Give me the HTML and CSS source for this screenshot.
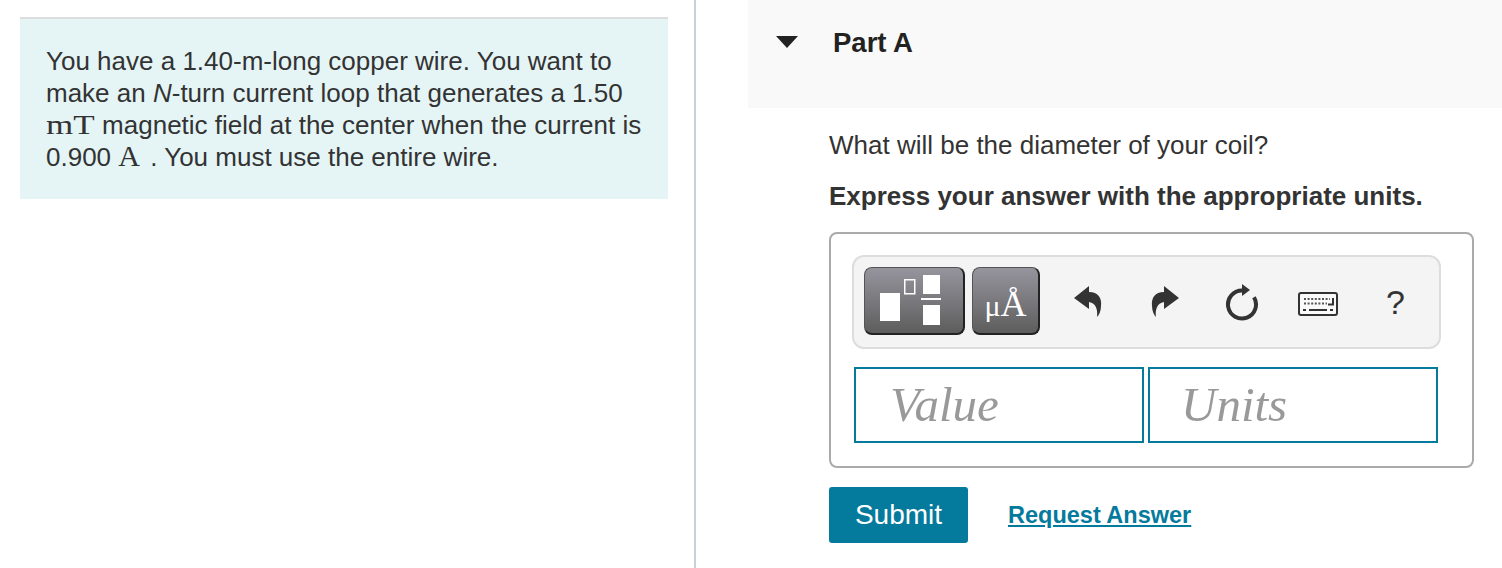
FILE: index.html
```html
<!DOCTYPE html>
<html lang="en">
<head>
  <meta charset="UTF-8">
  <meta name="viewport" content="width=device-width, initial-scale=1.0">
  <title>Part A</title>
  <link rel="stylesheet" href="styles.css">
</head>
<body>
  <div class="left-pane">
    <div class="statement">
      You have a 1.40-m-long copper wire. You want to make an <i>N</i>-turn current loop that generates a 1.50
      <span class="math math-wide">mT</span> magnetic field at the center when the current is
      0.900 <span class="math math-amp">A</span> . You must use the entire wire.
    </div>
  </div>
  <div class="right-pane">
    <div class="part-header">
      <span class="arrow"></span>
      <h2>Part A</h2>
    </div>
    <div class="part-body">
      <p class="question">What will be the diameter of your coil?</p>
      <p class="instruction">Express your answer with the appropriate units.</p>
      <div class="answer-box">
        <div class="toolbar">
          <div class="tool-btn tool-btn-wide">
            <svg width="101" height="68" viewBox="0 0 101 68">
              <rect x="16" y="26" width="20" height="28" fill="#fff"/>
              <rect x="40.75" y="12.75" width="10" height="14" fill="none" stroke="#fff" stroke-width="1.5"/>
              <rect x="59" y="8" width="17" height="19" fill="#fff"/>
              <rect x="57" y="31" width="20" height="2" fill="#fff"/>
              <rect x="59" y="38" width="17" height="20" fill="#fff"/>
            </svg>
          </div>
          <div class="tool-btn tool-btn-units"><span class="mu">&mu;</span><span class="angstrom">&Aring;</span></div>
          <div class="tool-icons">
            <svg width="28" height="32" viewBox="0 0 28 32">
              <path d="M0 12 L15 0 V6 C24 6 28 12 27 20 C27 25 25 29 23 31 C24 24 22 17 15 16 V23 Z" fill="#333"/>
            </svg>
            <svg width="28" height="32" viewBox="0 0 28 32">
              <path transform="translate(28 0) scale(-1 1)" d="M0 12 L15 0 V6 C24 6 28 12 27 20 C27 25 25 29 23 31 C24 24 22 17 15 16 V23 Z" fill="#333"/>
            </svg>
            <svg width="34" height="38" viewBox="0 0 34 38">
              <path d="M17 7.5 A14 14 0 1 0 29 14.3" fill="none" stroke="#333" stroke-width="4"/>
              <path d="M17 1 L25 7 L17 13 Z" fill="#333"/>
            </svg>
            <svg class="keyboard" width="40" height="24" viewBox="0 0 40 24">
              <rect x="1" y="1" width="38" height="22" rx="2" fill="#fafafa" stroke="#333" stroke-width="2"/>
              <path d="M6 7 H32" stroke="#555" stroke-width="2" stroke-dasharray="2 1.6"/>
              <path d="M6 11.5 H29" stroke="#555" stroke-width="2" stroke-dasharray="2 1.6"/>
              <path d="M30 12.5 H35 V6" fill="none" stroke="#333" stroke-width="2"/>
              <path d="M5 18 H8 M11 18 H29 M32 18 H35" stroke="#333" stroke-width="2"/>
            </svg>
            <span class="tool-help">?</span>
          </div>
        </div>
        <div class="inputs">
          <div class="field">Value</div>
          <div class="field field-units">Units</div>
        </div>
      </div>
      <div class="actions">
        <button type="button" class="submit-btn">Submit</button>
        <a href="#" class="request-link">Request Answer</a>
      </div>
    </div>
  </div>
</body>
</html>
```

FILE: styles.css
```css
body {
  margin: 0;
  height: 568px;
  display: flex;
  overflow: hidden;
  background-color: #fff;
  color: #333;
  font-family: "Liberation Sans", Arial, sans-serif;
}
.left-pane {
  width: 696px;
  height: 568px;
  padding: 17px 26px 0 20px;
  box-sizing: border-box;
  border-right: 2px solid #c3d2db;
  flex-shrink: 0;
}
.statement {
  height: 182px;
  box-sizing: border-box;
  padding: 26px 20px 0 26px;
  border-top: 2px solid #ddd;
  background-color: #e5f5f6;
  font-size: 26px;
  line-height: 32px;
}
.math {
  font-family: "Liberation Serif", serif;
  font-size: 30px;
  line-height: 0;
}
.math-amp {
  margin-right: 3px;
}
.math-wide {
  display: inline-block;
  font-size: 28px;
  line-height: 28px;
  margin-right: 10px;
  transform: scaleX(1.25);
  transform-origin: left;
}
.right-pane {
  flex: 1;
  padding-left: 52px;
}
.part-header {
  height: 108px;
  background-color: #f9f9f9;
  display: flex;
  align-items: flex-start;
}
.arrow {
  width: 0;
  height: 0;
  margin: 36px 0 0 28px;
  border-left: 11px solid transparent;
  border-right: 11px solid transparent;
  border-top: 12px solid #222;
}
.part-header h2 {
  margin: 28px 0 0 35px;
  font-size: 27.5px;
  line-height: 30px;
  font-weight: bold;
  color: #222;
}
.part-body {
  padding-left: 81px;
  width: 645px;
}
.question {
  margin: 22px 0 0;
  font-size: 26px;
  line-height: 30px;
}
.instruction {
  margin: 21px 0 0;
  font-size: 26px;
  line-height: 30px;
  font-weight: bold;
}
.answer-box {
  margin-top: 21px;
  height: 236px;
  box-sizing: border-box;
  padding: 21px;
  border: 2px solid #aaa;
  border-radius: 8px;
}
.toolbar {
  height: 94px;
  width: 589px;
  box-sizing: border-box;
  padding: 10px;
  border: 2px solid #ddd;
  border-radius: 12px;
  background-color: #f4f4f4;
  display: flex;
  gap: 7px;
}
.tool-btn {
  height: 68px;
  flex-shrink: 0;
  box-sizing: border-box;
  border: 1px solid #555;
  border-bottom: 2px solid #222;
  border-right: 2px solid #222;
  border-radius: 8px;
  background: linear-gradient(#96959e, #5d5d5d);
  color: #fff;
}
.tool-btn-wide {
  width: 101px;
}
.tool-btn-wide svg {
  display: block;
  margin: -1px;
}
.tool-btn-units {
  width: 68px;
  text-align: center;
  font-family: "Liberation Serif", serif;
  line-height: 72px;
  white-space: nowrap;
}
.mu {
  font-size: 30px;
}
.angstrom {
  font-size: 36px;
}
.tool-icons {
  margin-left: 2px;
  display: grid;
  grid-template-columns: repeat(5, 77px);
  justify-items: center;
  align-items: center;
}
.tool-icons svg {
  display: block;
}
.tool-icons .keyboard {
  margin: 3px 1px 0 0;
}
.tool-help {
  font-size: 34px;
  color: #333;
}
.inputs {
  margin: 18px 0 0 2px;
  display: flex;
  gap: 4px;
}
.field {
  width: 290px;
  height: 76px;
  box-sizing: border-box;
  border: 2px solid #047a9c;
  padding-left: 34px;
  font-family: "Liberation Serif", serif;
  font-style: italic;
  font-size: 49px;
  line-height: 72px;
  color: #999;
}
.field-units {
  padding-left: 31px;
}
.actions {
  margin-top: 19px;
  display: flex;
  align-items: center;
  gap: 40px;
}
.submit-btn {
  width: 139px;
  height: 56px;
  border: none;
  border-radius: 3px;
  background-color: #047a9c;
  color: #fff;
  font-family: "Liberation Sans", Arial, sans-serif;
  font-size: 28px;
}
.request-link {
  font-size: 23.5px;
  font-weight: bold;
  color: #047a9c;
}
```
